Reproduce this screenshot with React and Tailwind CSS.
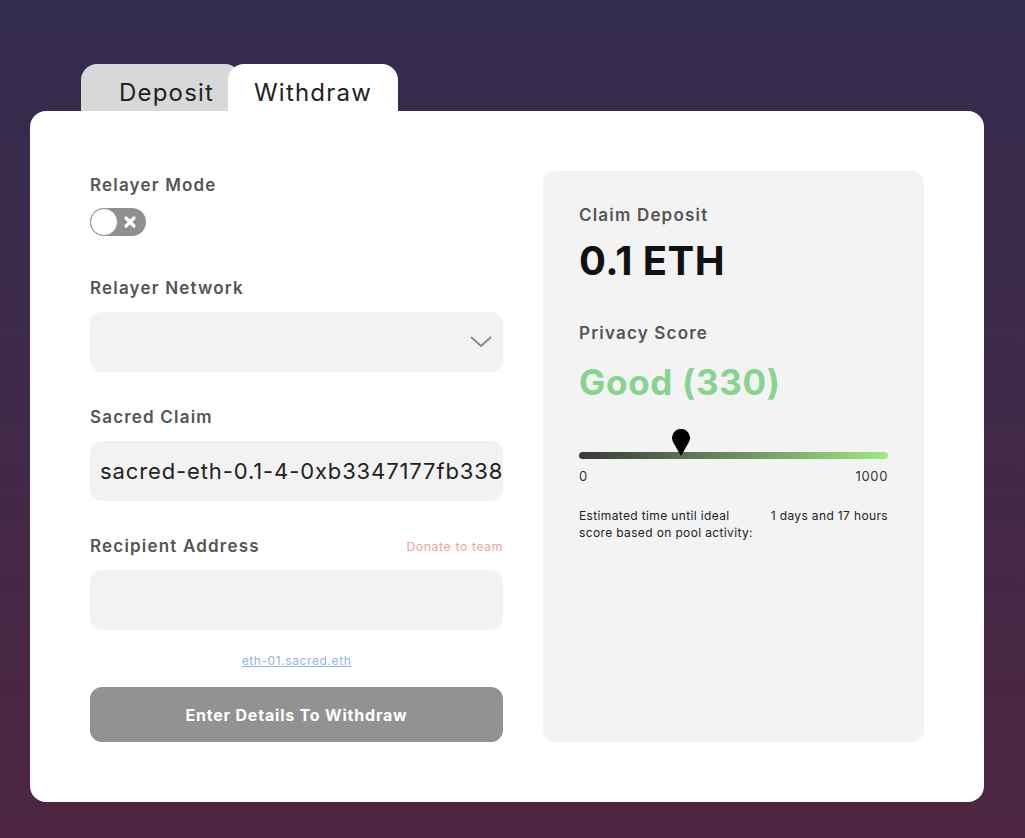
import React from "react";

const font = { fontFamily: "Inter, 'Noto Sans', sans-serif" };

function Label({ children }) {
  return (
    <div className="text-[17px] font-semibold text-[#555555] leading-[20px] tracking-[0.07em]">
      {children}
    </div>
  );
}

export default function App() {
  return (
    <div
      className="w-[1025px] h-[838px] bg-gradient-to-b from-[#332c4f] to-[#4d2541] overflow-hidden"
      style={font}
    >
      <div className="pt-[64px] pl-[30px]">
        <div className="flex pl-[51px] h-[47px]">
          <div className="w-[160px] bg-[#d8d8d8] rounded-tl-[16px] rounded-tr-[16px] flex items-center pl-[38px] text-[24px] text-[#222] pt-[10px] tracking-[0.05em]">
            Deposit
          </div>
          <div className="-ml-[13px] w-[170px] bg-white rounded-t-[16px] flex items-center justify-center text-[24px] text-[#222] pt-[10px] tracking-[0.05em]">
            Withdraw
          </div>
        </div>
        <div className="w-[954px] h-[691px] bg-white rounded-[16px] flex px-[60px] pt-[60px] gap-[40px]">
          <div className="w-[413px] flex flex-col">
            <div className="mt-[4px]"><Label>Relayer Mode</Label></div>
            <div className="mt-[13px] w-[56px] h-[28px] rounded-full bg-[#8f8f8f] relative flex items-center">
              <div className="w-[28px] h-[28px] rounded-full bg-white border border-[#9a9a9a]" />
              <svg className="absolute left-[33px] top-[7px]" width="14" height="14" viewBox="0 0 14 14">
                <path d="M3 3 L11 11 M11 3 L3 11" stroke="white" strokeWidth="3.2" strokeLinecap="round" />
              </svg>
            </div>
            <div className="mt-[42px]"><Label>Relayer Network</Label></div>
            <div className="mt-[14px] h-[60px] rounded-[12px] bg-[#f2f2f2] flex items-center justify-end pr-[10px]">
              <svg width="24" height="14" viewBox="0 0 24 14">
                <path d="M2 2 L12 11 L22 2" stroke="#8a8a8a" strokeWidth="2" fill="none" />
              </svg>
            </div>
            <div className="mt-[35px]"><Label>Sacred Claim</Label></div>
            <div className="mt-[14px] h-[60px] rounded-[12px] bg-[#f2f2f2] flex items-center pl-[10px] overflow-hidden">
              <span className="text-[22px] text-[#222] whitespace-nowrap tracking-[0.04em]">
                sacred-eth-0.1-4-0xb3347177fb338ac2
              </span>
            </div>
            <div className="mt-[35px] flex items-end justify-between">
              <Label>Recipient Address</Label>
              <span className="text-[12px] text-[#f0a0a0] tracking-[0.06em]">Donate to team</span>
            </div>
            <div className="mt-[14px] h-[60px] rounded-[12px] bg-[#f2f2f2]" />
            <div className="mt-[23px] text-center text-[12px] text-[#8db6ea] underline leading-[16px] tracking-[0.05em]">
              eth-01.sacred.eth
            </div>
            <button className="mt-[18px] h-[55px] rounded-[12px] bg-[#929294] text-white text-[16px] font-bold tracking-[0.05em]">
              Enter Details To Withdraw
            </button>
          </div>
          <div className="w-[381px] h-[571px] bg-[#f3f3f3] rounded-[12px] px-[36px] pt-[34px]">
            <Label>Claim Deposit</Label>
            <div className="mt-[13px] text-[40px] font-bold text-[#111] leading-[46px] tracking-[0.01em]">0.1 ETH</div>
            <div className="mt-[39px]"><Label>Privacy Score</Label></div>
            <div className="mt-[18px] text-[35px] font-bold text-[#86d48f] leading-[42px] tracking-[0.02em]">
              Good (330)
            </div>
            <div className="mt-[26px] relative h-[30px]">
              <div className="absolute left-0 right-0 bottom-0 h-[7px] rounded-full bg-gradient-to-r from-[#3a3a3a] to-[#9deb7f]" />
              <svg className="absolute left-[92px] top-0" width="20" height="28" viewBox="0 0 20 28">
                <path d="M10 27 L2.3 13.5 A9 9 0 1 1 17.7 13.5 Z" fill="black" />
              </svg>
            </div>
            <div className="mt-[9px] flex justify-between text-[13px] leading-[16px] text-[#333] tracking-[0.05em]">
              <span>0</span>
              <span>1000</span>
            </div>
            <div className="mt-[23px] flex justify-between text-[12px] text-[#222] leading-[17px] tracking-[0.03em]">
              <span>
                Estimated time until ideal
                <br />
                score based on pool activity:
              </span>
              <span>1 days and 17 hours</span>
            </div>
          </div>
        </div>
      </div>
    </div>
  );
}
